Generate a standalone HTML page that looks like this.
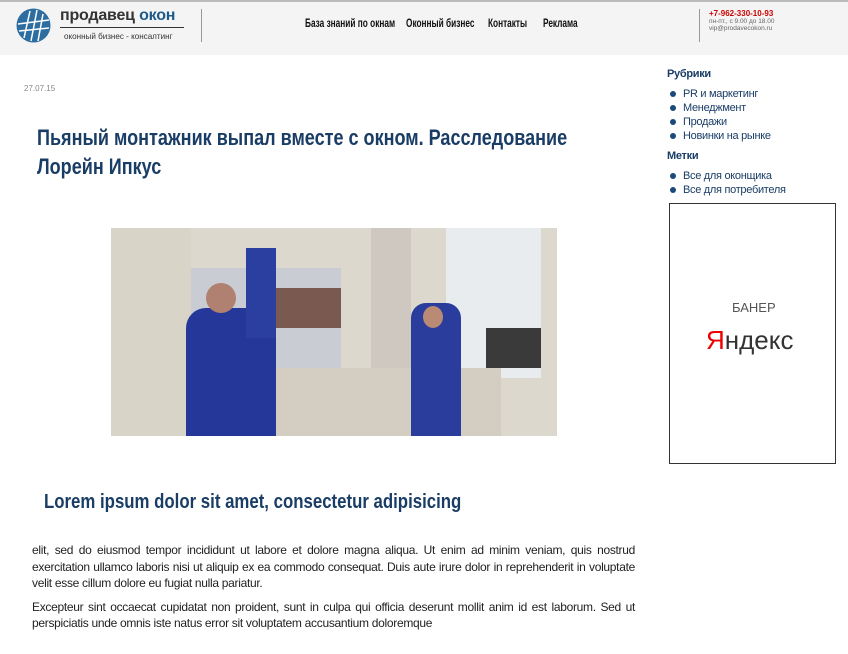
<!DOCTYPE html>
<html><head><meta charset="utf-8"><style>
body{margin:0;width:848px;height:654px;background:#fff;position:relative;overflow:hidden;font-family:"Liberation Sans",sans-serif;}
.a{position:absolute;white-space:nowrap}
.s{transform-origin:0 0}
.hdr{position:absolute;left:0;top:0;width:848px;height:55px;background:#f4f4f4;border-top:2px solid #bbb;box-sizing:border-box}
.nav{font-size:12px;color:#111;font-weight:bold;transform:scaleX(0.69);transform-origin:0 0}
.side{font-size:11px;color:#1a3d66;letter-spacing:-0.3px}
.side li{list-style:none;position:relative;padding-left:16px;line-height:14px}
.side li:before{content:"";position:absolute;left:3px;top:4px;width:6px;height:6px;border-radius:50%;background:#1a4a7a}
ul{margin:0;padding:0}
p{margin:0}
</style></head><body>
<div class="hdr"></div>
<svg class="a" style="left:16px;top:8px" width="35" height="35" viewBox="0 0 35 35"><circle cx="17.5" cy="17.5" r="17" fill="#2d6da0"/><path d="M8 30 L14 3 M15 33 L21 2 M22 33 L27 6 M2 16 L33 12 M3 23 L33 20" stroke="#fff" stroke-width="1.5"/></svg>
<div class="a" style="left:60px;top:7px;font-size:16px;font-weight:bold;color:#333;letter-spacing:-0.2px">продавец <span style="color:#1e5a8a">окон</span></div>
<div class="a" style="left:60px;top:27px;width:124px;border-top:1px solid #333"></div>
<div class="a s" style="left:64px;top:31px;font-size:8.5px;color:#333;transform:scaleX(0.95)">оконный бизнес - консалтинг</div>
<div class="a" style="left:201px;top:9px;width:1px;height:33px;background:#999"></div>
<div class="a nav" style="left:305px;top:16px">База знаний по окнам</div>
<div class="a nav" style="left:406px;top:16px">Оконный бизнес</div>
<div class="a nav" style="left:488px;top:16px">Контакты</div>
<div class="a nav" style="left:543px;top:16px">Реклама</div>
<div class="a" style="left:699px;top:9px;width:1px;height:33px;background:#999"></div>
<div class="a" style="left:709px;top:9px;font-size:8px;color:#c00;font-weight:bold">+7-962-330-10-93</div>
<div class="a" style="left:709px;top:18px;font-size:6.5px;color:#666;line-height:7px">пн-пт., с 9.00 до 18.00<br>vip@prodavecokon.ru</div>

<div class="a" style="left:24px;top:84px;font-size:8px;color:#888">27.07.15</div>
<div class="a s" style="left:37px;top:123px;font-size:22px;font-weight:bold;color:#1a3d66;line-height:29px;transform:scaleX(0.82)">Пьяный монтажник выпал вместе с окном. Расследование<br>Лорейн Ипкус</div>

<div class="a" style="left:111px;top:228px;width:446px;height:208px;background:#ddd8ce;overflow:hidden">
<div class="a" style="left:0;top:0;width:80px;height:208px;background:#d8d4c8"></div>
<div class="a" style="left:80px;top:40px;width:150px;height:100px;background:#c9ccd2"></div>
<div class="a" style="left:150px;top:60px;width:80px;height:40px;background:#7a5a50"></div>
<div class="a" style="left:260px;top:0;width:40px;height:170px;background:#cfc8c0"></div>
<div class="a" style="left:335px;top:0;width:95px;height:150px;background:#e8ecee"></div>
<div class="a" style="left:375px;top:100px;width:55px;height:40px;background:#3a3a3a"></div>
<div class="a" style="left:80px;top:140px;width:310px;height:68px;background:#d3cdc2"></div>
<div class="a" style="left:75px;top:80px;width:90px;height:128px;background:#25389a;border-radius:20px 20px 0 0"></div>
<div class="a" style="left:135px;top:20px;width:30px;height:90px;background:#2b3fa0"></div>
<div class="a" style="left:95px;top:55px;width:30px;height:30px;background:#b08070;border-radius:50%"></div>
<div class="a" style="left:300px;top:75px;width:50px;height:133px;background:#2a3c9c;border-radius:15px 15px 0 0"></div>
<div class="a" style="left:312px;top:78px;width:20px;height:22px;background:#b98a74;border-radius:50%"></div>
</div>

<div class="a s" style="left:44px;top:491px;font-size:20px;font-weight:bold;color:#1a3d66;transform:scaleX(0.84)">Lorem ipsum dolor sit amet, consectetur adipisicing</div>
<div class="a" style="left:32px;top:542px;width:603px;font-size:12px;color:#222;line-height:16.5px;text-align:justify;white-space:normal;letter-spacing:-0.3px">
<p>elit, sed do eiusmod tempor incididunt ut labore et dolore magna aliqua. Ut enim ad minim veniam, quis nostrud exercitation ullamco laboris nisi ut aliquip ex ea commodo consequat. Duis aute irure dolor in reprehenderit in voluptate velit esse cillum dolore eu fugiat nulla pariatur.</p>
<p style="margin-top:7px">Excepteur sint occaecat cupidatat non proident, sunt in culpa qui officia deserunt mollit anim id est laborum. Sed ut perspiciatis unde omnis iste natus error sit voluptatem accusantium doloremque</p>
</div>

<div class="a side" style="left:667px;top:68px;font-weight:bold">Рубрики</div>
<ul class="a side" style="left:667px;top:87px"><li>PR и маркетинг</li><li>Менеджмент</li><li>Продажи</li><li>Новинки на рынке</li></ul>
<div class="a side" style="left:667px;top:150px;font-weight:bold">Метки</div>
<ul class="a side" style="left:667px;top:169px"><li>Все для оконщика</li><li>Все для потребителя</li></ul>

<div class="a" style="left:669px;top:203px;width:165px;height:259px;border:1px solid #333"></div>
<div class="a" style="left:732px;top:300px;font-size:13px;color:#555">БАНЕР</div>
<div class="a" style="left:706px;top:325px;font-size:26px;color:#333"><span style="color:#e00">Я</span>ндекс</div>
</body></html>
